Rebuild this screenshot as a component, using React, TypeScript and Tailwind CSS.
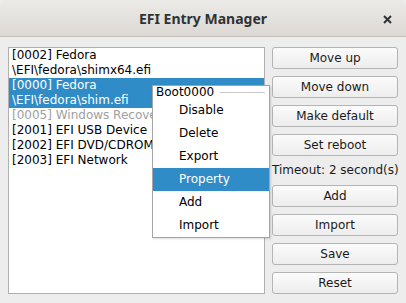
import React from "react";

const entries = [
  { lines: ["[0002] Fedora", "\\EFI\\fedora\\shimx64.efi"] },
  { lines: ["[0000] Fedora", "\\EFI\\fedora\\shim.efi"], selected: true },
  { lines: ["[0005] Windows Recovery Environment"], disabled: true },
  { lines: ["[2001] EFI USB Device"] },
  { lines: ["[2002] EFI DVD/CDROM"] },
  { lines: ["[2003] EFI Network"] },
];

const topButtons = ["Move up", "Move down", "Make default", "Set reboot"];
const bottomButtons = ["Add", "Import", "Save", "Reset"];
const menuItems = ["Disable", "Delete", "Export", "Property", "Add", "Import"];

function Button({ label }: { label: string }) {
  return (
    <button className="h-[22px] w-full rounded-[3px] border border-[#b4b4b4] bg-gradient-to-b from-[#fbfbfb] to-[#ededed] text-[12px] leading-none text-[#1a1a1a]">
      {label}
    </button>
  );
}

export default function App() {
  return (
    <div
      className="relative h-[303px] w-[406px] overflow-hidden bg-[#ededed] text-[12px]"
      style={{ fontFamily: '"DejaVu Sans", sans-serif' }}
    >
      {/* title bar */}
      <div className="relative flex h-[37px] items-center justify-center rounded-t-[7px] border-b border-[#c4beb8] bg-gradient-to-b from-[#eceae7] to-[#dcd9d5]">
        <span
          className="text-[14px] font-bold text-[#2e3436]"
          style={{ fontFamily: '"Noto Sans", sans-serif' }}
        >
          EFI Entry Manager
        </span>
        <svg
          className="absolute right-[14px] top-[15px]"
          width="9"
          height="9"
          viewBox="0 0 9 9"
        >
          <path d="M1 1L8 8M8 1L1 8" stroke="#2e3436" strokeWidth="2" />
        </svg>
      </div>

      {/* body */}
      <div className="flex gap-[7px] px-2 pb-[9px] pt-[10px]">
        <div className="h-[247px] flex-1 overflow-hidden border border-[#b0b0b0] bg-white">
          {entries.map((e, i) => (
            <div
              key={i}
              className={
                e.selected
                  ? "bg-[#308cc6] px-[3px] text-white"
                  : e.disabled
                  ? "px-[3px] text-[#a0a0a0]"
                  : "px-[3px] text-black"
              }
            >
              {e.lines.map((l) => (
                <div key={l} className="h-[15px] whitespace-nowrap leading-[15px]">
                  {l}
                </div>
              ))}
            </div>
          ))}
        </div>

        <div className="flex w-[126px] flex-col gap-[7px]">
          {topButtons.map((b) => (
            <Button key={b} label={b} />
          ))}
          <div className="h-[15px] whitespace-nowrap leading-[15px] text-[#1a1a1a]">
            Timeout: 2 second(s)
          </div>
          {bottomButtons.map((b) => (
            <Button key={b} label={b} />
          ))}
        </div>
      </div>

      {/* context menu */}
      <div className="absolute left-[152px] top-[85px] w-[118px] border border-[#a4a4a4] bg-white shadow-[1px_1px_2px_rgba(0,0,0,0.15)]">
        <div className="flex h-[13px] items-center pl-[3px] pr-[4px] leading-[13px] text-black">
          <span>Boot0000</span>
          <div className="ml-[6px] h-px flex-1 bg-[#c8c8c8]" />
        </div>
        {menuItems.map((m) => (
          <div
            key={m}
            className={
              m === "Property"
                ? "h-[23px] bg-[#308cc6] pl-[26px] leading-[23px] text-white"
                : "h-[23px] pl-[26px] leading-[23px] text-black"
            }
          >
            {m}
          </div>
        ))}
      </div>
    </div>
  );
}
